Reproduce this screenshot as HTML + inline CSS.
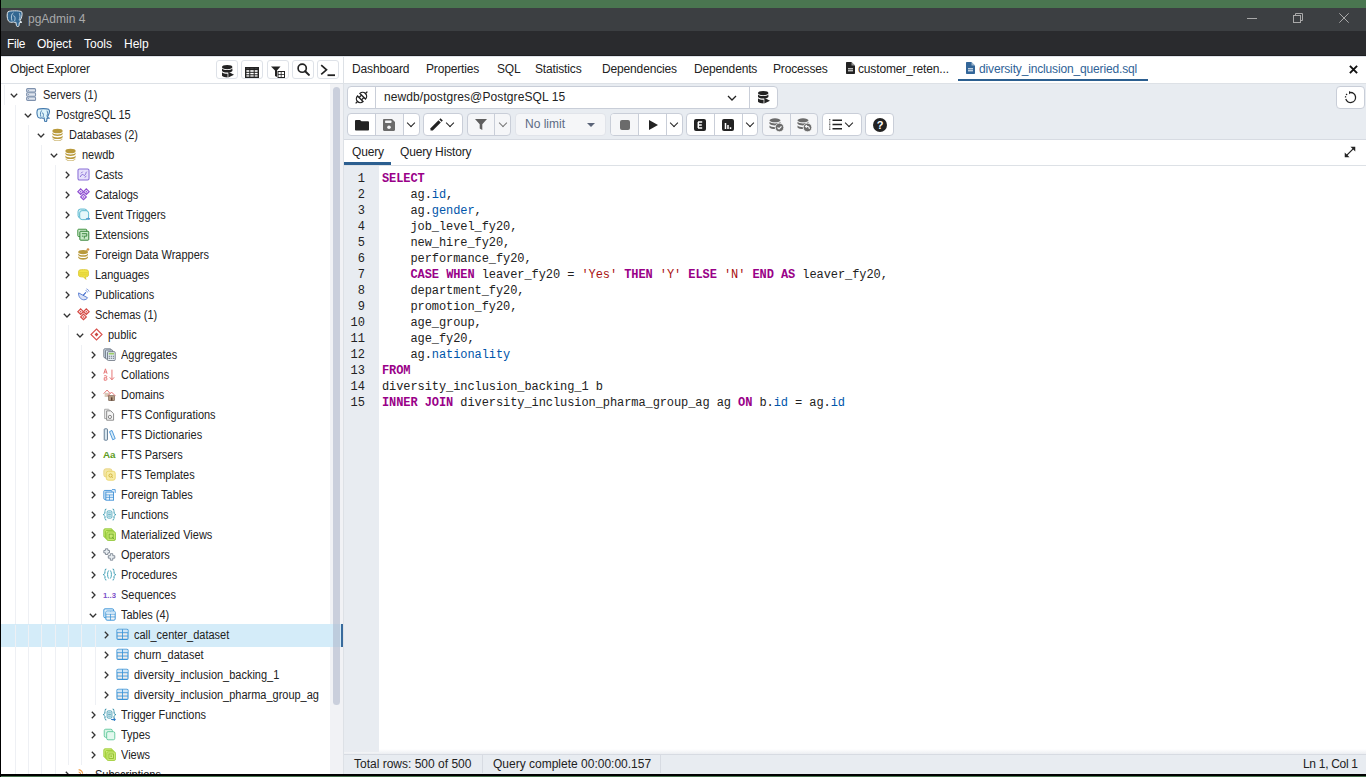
<!DOCTYPE html>
<html><head><meta charset="utf-8">
<style>

*{box-sizing:border-box;margin:0;padding:0}
html,body{width:1366px;height:777px;overflow:hidden;background:#fff;font-family:"Liberation Sans",sans-serif;position:relative}
.a{position:absolute}
#green{left:0;top:0;width:1366px;height:8px;background:#4a7650}
#title{left:0;top:8px;width:1366px;height:23px;background:#3c3f42}
#menu{left:0;top:31px;width:1366px;height:24px;background:#2a2b2e}
#lborder{left:0;top:0;width:1px;height:777px;background:#000;z-index:50}
#bottom{left:0;top:774px;width:1366px;height:2px;background:#000;z-index:49}
#bgreen{left:0;top:776px;width:1366px;height:1px;background:#4a7650;z-index:49}
.menu{color:#fff;font-size:12px;top:37px}
.tt{color:#a9aaab;font-size:12px}
/* left panel */
#oehdr{left:1px;top:55px;width:342px;height:29px;background:#fff;border-bottom:1px solid #dde1e6}
#oehdr .t{left:9px;top:7px;font-size:12px;color:#222;letter-spacing:-0.2px}
.oebtn{top:5px;width:22px;height:19px;border:1px solid #dee2e8;border-radius:3px;background:#fff}
#sep{left:343px;top:55px;width:1px;height:719px;background:#dde1e6}
#tree{left:1px;top:84px;width:342px;height:690px;overflow:hidden;background:#fff}
.row{position:absolute;left:0;width:342px;height:20px}
.row .tx{position:absolute;top:3px;font-size:12px;transform:scaleX(0.915);transform-origin:0 0;color:#222;white-space:nowrap;line-height:14px}
.guide{position:absolute;width:1px;background:#eef0f4}
#strack{left:329px;top:0;width:13px;height:690px;background:#f1f2f5}
#sthumb{left:332px;top:3px;width:7px;height:618px;background:rgba(170,178,198,0.55);border-radius:4px;z-index:5}
/* right */
#tabbar{left:344px;top:55px;width:1022px;height:29px;background:#fff;border-bottom:1px solid #dde1e6}
.tab{top:62px;font-size:12px;color:#222;white-space:nowrap;letter-spacing:-0.15px}
#tbar{left:344px;top:84px;width:1022px;height:56px;background:#e8ecf1;border-bottom:1px solid #d7dbe2}
.box{border:1px solid #c9ced8;border-radius:4px;background:#fff}
#qtabs{left:344px;top:140px;width:1022px;height:26px;background:#fff;border-bottom:1px solid #dde1e6}
#gutter{left:344px;top:166px;width:35px;height:586px;background:#e8ecf1}
#editor{left:379px;top:166px;width:987px;height:586px;background:#fff}
.ln{position:absolute;left:0;width:21px;text-align:right;font-family:"Liberation Mono",monospace;font-size:12px;color:#222;line-height:16px}
.code{position:absolute;left:382px;font-family:"Liberation Mono",monospace;font-size:12px;letter-spacing:-0.08px;color:#222;line-height:16px;white-space:pre}
.k{color:#908;font-weight:bold}
.s{color:#a11}
.p{color:#05a}
#status{left:344px;top:754px;width:1022px;height:20px;background:#e8ecf1;border-top:1px solid #d7dbe2}
.st{font-size:12px;color:#222;top:757px;white-space:nowrap}

.row .chev{position:absolute;line-height:0}
.row .ico{position:absolute;top:3px;line-height:0}
.row.sel::before{content:"";position:absolute;left:0;top:-1px;width:342px;height:23px;background:#d4ecf9}
.selbar{position:absolute;left:340px;top:-1px;width:2px;height:23px;background:#386a9c;z-index:6}
.guide{top:0;height:20px}

.box.dis{background:#f5f6f8}
.chevd{width:10px;height:6px;line-height:0}
.chevd::before{content:"";position:absolute;left:1.5px;top:-3px;width:5px;height:5px;border-right:1.5px solid #222;border-bottom:1.5px solid #222;transform:rotate(45deg)}
.chevd.g::before{border-color:#777}
.qt{top:145px;font-size:12px;color:#222;letter-spacing:-0.15px;white-space:nowrap}

</style></head><body>
<div class="a" id="green"></div>
<div class="a" id="title"></div>
<div class="a" style="left:6px;top:10px;line-height:0"><svg width="17" height="17" viewBox="0 0 16 16"><path d="M2 1.5C4 0.6 12 0.4 14.5 1.5 15.6 2.5 15.2 6 14 8.5 13.5 9.5 13.2 10 13 10.5L15 11.5 12.5 12 12.3 14.5C12.1 16 10 16 9.8 14.5L9.3 11.5C8.5 11.8 7.5 11.8 6.8 11.2 5.5 12 3 11.5 2.2 10.2 0.9 7.8 0.6 3.5 2 1.5Z" fill="#336791" stroke="#e8eef2" stroke-width="0.9"/><path d="M7 2.8C5 3.4 4.6 7 5.6 10M6.8 5.5C8.5 5.2 9 8 8 10.5M12.5 3C13.5 5 13.4 7.5 12.3 9.5" fill="none" stroke="#c9dbe8" stroke-width="0.8"/></svg></div>
<div class="a tt" style="left:28px;top:12px">pgAdmin 4</div>
<div class="a" style="left:1247px;top:18px;width:10px;height:1px;background:#a9a9a9"></div>
<div class="a" style="left:1293px;top:13px;line-height:0"><svg width="10" height="10" viewBox="0 0 10 10"><path d="M2.5 2.5V0.5H9.5V7.5H7.5" fill="none" stroke="#a9a9a9" stroke-width="1"/><rect x="0.5" y="2.5" width="7" height="7" fill="none" stroke="#a9a9a9" stroke-width="1"/></svg></div>
<div class="a" style="left:1339px;top:13px;line-height:0"><svg width="10" height="10" viewBox="0 0 10 10"><path d="M0.3 0.3 9.7 9.7M9.7 0.3 0.3 9.7" stroke="#a9a9a9" stroke-width="1"/></svg></div>
<div class="a" id="menu"></div>
<div class="a menu" style="left:7px;letter-spacing:-0.3px">File</div>
<div class="a menu" style="left:37px">Object</div>
<div class="a menu" style="left:84px">Tools</div>
<div class="a menu" style="left:124px">Help</div>
<div class="a" id="lborder"></div>
<div class="a" style="left:0;top:55px;width:1366px;height:1px;background:#1d1e20;z-index:40"></div>
<div class="a" style="left:0;top:56px;width:1366px;height:1px;background:#dfe3ea;z-index:40"></div>

<div class="a" id="oehdr"><div class="a t">Object Explorer</div>
<div class="a oebtn" style="left:215px"><svg width="12" height="13" viewBox="0 0 12 13" style="position:absolute;left:4.5px;top:4px"><g fill="#222"><ellipse cx="5.2" cy="2.1" rx="5.2" ry="2.1"/><path d="M0 3.4C1 4.6 3 5 5.2 5S9.4 4.6 10.4 3.4V6C9.4 7.2 7.4 7.6 5.2 7.6S1 7.2 0 6Z"/><path d="M0 7.2C1 8.4 3 8.8 5.6 8.8V12.4C3 12.4 1 11.9 0 10.8Z"/><path d="M6.3 6.8 12 9.7 6.3 12.6Z"/></g></svg></div>
<div class="a oebtn" style="left:240px"><svg width="14" height="11" viewBox="0 0 14 11" style="position:absolute;left:3px;top:6px"><rect x="0.7" y="0.7" width="12.6" height="9.6" fill="none" stroke="#222" stroke-width="1.4"/><path d="M0.7 2.2H13.3" stroke="#222" stroke-width="2"/><path d="M0.7 5.3H13.3M0.7 7.8H13.3M4.8 0.7V10.3M9.2 0.7V10.3" stroke="#222" stroke-width="1"/></svg></div>
<div class="a oebtn" style="left:266px"><svg width="14" height="12" viewBox="0 0 14 12" style="position:absolute;left:3px;top:5px"><path d="M0 0.5H9.5L6 4.5V11L4 10V4.5Z" fill="#222"/><rect x="7" y="5.5" width="6.5" height="6" fill="none" stroke="#222" stroke-width="1"/><path d="M7 8.5H13.5M10.2 5.5V11.5" stroke="#222" stroke-width="0.8"/></svg></div>
<div class="a oebtn" style="left:291px"><svg width="13" height="13" viewBox="0 0 14 14" style="position:absolute;left:4px;top:2px"><circle cx="5.6" cy="5.6" r="4.4" fill="none" stroke="#222" stroke-width="1.8"/><path d="M8.8 8.8 12.8 12.8" stroke="#222" stroke-width="2.2" stroke-linecap="round"/></svg></div>
<div class="a oebtn" style="left:316px"><svg width="16" height="13" viewBox="0 0 16 13" style="position:absolute;left:2px;top:3px"><path d="M1.2 1.2 6.5 5.8 1.2 10.4" fill="none" stroke="#222" stroke-width="1.7"/><path d="M7.5 11.2H15" stroke="#222" stroke-width="1.8"/></svg></div>
</div>
<div class="a" id="tree">
<div class="a" id="strack"></div><div class="a" id="sthumb"></div>
<div class="row" style="top:1px"><div class="guide" style="left:2.5px"></div><div class="chev" style="left:9.4px;top:8px"><svg width="8" height="5" viewBox="0 0 8 5"><path d="M0.8 0.8 4 4 7.2 0.8" fill="none" stroke="#333" stroke-width="1.3"/></svg></div><div class="ico" style="left:23.7px"><svg width="13" height="13" viewBox="0 0 16 16"><g fill="#dfe5ee" stroke="#7e91ad" stroke-width="1.3"><rect x="2" y="0.8" width="11" height="4.2" rx="1.2"/><rect x="2" y="5.9" width="11" height="4.2" rx="1.2"/><rect x="2" y="11" width="11" height="4.2" rx="1.2"/></g><g fill="#7e91ad"><rect x="3.5" y="2.5" width="1.5" height="1"/><rect x="3.5" y="7.5" width="1.5" height="1"/><rect x="3.5" y="12.6" width="1.5" height="1"/></g></svg></div><div class="tx" style="left:41.6px">Servers (1)</div></div>
<div class="row" style="top:21px"><div class="guide" style="left:13.5px"></div><div class="chev" style="left:22.5px;top:8px"><svg width="8" height="5" viewBox="0 0 8 5"><path d="M0.8 0.8 4 4 7.2 0.8" fill="none" stroke="#333" stroke-width="1.3"/></svg></div><div class="ico" style="left:36.8px"><svg style="margin-left:-1.5px" width="14" height="14" viewBox="0 0 16 16"><path d="M2 1.5C4 0.6 12 0.4 14.5 1.5 15.6 2.5 15.2 6 14 8.5 13.5 9.5 13.2 10 13 10.5L15 11.5 12.5 12 12.3 14.5C12.1 16 10 16 9.8 14.5L9.3 11.5C8.5 11.8 7.5 11.8 6.8 11.2 5.5 12 3 11.5 2.2 10.2 0.9 7.8 0.6 3.5 2 1.5Z" fill="#def4fb" stroke="#4379ad" stroke-width="1.25"/><path d="M7 2.8C5 3.4 4.6 7 5.6 10M6.8 5.5C8.5 5.2 9 8 8 10.5M12.5 3C13.5 5 13.4 7.5 12.3 9.5" fill="none" stroke="#4379ad" stroke-width="1"/></svg></div><div class="tx" style="left:54.7px">PostgreSQL 15</div></div>
<div class="row" style="top:41px"><div class="guide" style="left:13.5px"></div><div class="guide" style="left:26.8px"></div><div class="chev" style="left:35.6px;top:8px"><svg width="8" height="5" viewBox="0 0 8 5"><path d="M0.8 0.8 4 4 7.2 0.8" fill="none" stroke="#333" stroke-width="1.3"/></svg></div><div class="ico" style="left:49.9px"><svg width="13" height="13" viewBox="0 0 16 16"><g fill="#b99a3c"><ellipse cx="8" cy="3.6" rx="6.3" ry="2.8"/><path d="M1.7 5.6C2.5 7.3 5 7.9 8 7.9S13.5 7.3 14.3 5.6V7.5C13.5 9.2 11 9.9 8 9.9S2.5 9.2 1.7 7.5Z"/><path d="M1.7 9.3C2.5 11 5 11.6 8 11.6S13.5 11 14.3 9.3V11.3C13.5 13 11 13.6 8 13.6S2.5 13 1.7 11.3Z"/><path d="M1.7 13C2.5 14.5 5 15.2 8 15.2S13.5 14.5 14.3 13V13.6C13.5 15.2 11 15.8 8 15.8S2.5 15.2 1.7 13.6Z"/></g></svg></div><div class="tx" style="left:67.8px">Databases (2)</div></div>
<div class="row" style="top:61px"><div class="guide" style="left:13.5px"></div><div class="guide" style="left:26.8px"></div><div class="guide" style="left:40.2px"></div><div class="chev" style="left:48.7px;top:8px"><svg width="8" height="5" viewBox="0 0 8 5"><path d="M0.8 0.8 4 4 7.2 0.8" fill="none" stroke="#333" stroke-width="1.3"/></svg></div><div class="ico" style="left:63.0px"><svg width="13" height="13" viewBox="0 0 16 16"><g fill="#b99a3c"><ellipse cx="8" cy="3.6" rx="6.3" ry="2.8"/><path d="M1.7 5.6C2.5 7.3 5 7.9 8 7.9S13.5 7.3 14.3 5.6V7.5C13.5 9.2 11 9.9 8 9.9S2.5 9.2 1.7 7.5Z"/><path d="M1.7 9.3C2.5 11 5 11.6 8 11.6S13.5 11 14.3 9.3V11.3C13.5 13 11 13.6 8 13.6S2.5 13 1.7 11.3Z"/><path d="M1.7 13C2.5 14.5 5 15.2 8 15.2S13.5 14.5 14.3 13V13.6C13.5 15.2 11 15.8 8 15.8S2.5 15.2 1.7 13.6Z"/></g></svg></div><div class="tx" style="left:80.9px">newdb</div></div>
<div class="row" style="top:81px"><div class="guide" style="left:13.5px"></div><div class="guide" style="left:26.8px"></div><div class="guide" style="left:40.2px"></div><div class="guide" style="left:53.5px"></div><div class="chev" style="left:63.6px;top:6px"><svg width="5" height="8" viewBox="0 0 5 8"><path d="M0.8 0.8 4 4 0.8 7.2" fill="none" stroke="#333" stroke-width="1.3"/></svg></div><div class="ico" style="left:76.1px"><svg width="13" height="13" viewBox="0 0 16 16"><rect x="1.2" y="1.2" width="13.6" height="13.6" rx="1.8" fill="#e6e0fb" stroke="#8a6fd8" stroke-width="1.3"/><path d="M4 11C5 9 5.5 8 7 8S8 10 9.5 9 11 5 12 4.5M5 6.5 7 4.5M9.5 11.5 11.5 10" fill="none" stroke="#7b5fd0" stroke-width="1.1"/></svg></div><div class="tx" style="left:94.0px">Casts</div></div>
<div class="row" style="top:101px"><div class="guide" style="left:13.5px"></div><div class="guide" style="left:26.8px"></div><div class="guide" style="left:40.2px"></div><div class="guide" style="left:53.5px"></div><div class="chev" style="left:63.6px;top:6px"><svg width="5" height="8" viewBox="0 0 5 8"><path d="M0.8 0.8 4 4 0.8 7.2" fill="none" stroke="#333" stroke-width="1.3"/></svg></div><div class="ico" style="left:76.1px"><svg width="13" height="13" viewBox="0 0 16 16"><g fill="#eadcfa" stroke="#8f4fd0" stroke-width="1.45"><path d="M4.5 1 8 4.5 4.5 8 1 4.5Z"/><path d="M11.5 1 15 4.5 11.5 8 8 4.5Z"/><path d="M8 7.5 11.5 11 8 14.5 4.5 11Z"/></g><g fill="#8f4fd0"><circle cx="4.5" cy="4.5" r="0.9"/><circle cx="11.5" cy="4.5" r="0.9"/><circle cx="8" cy="11" r="0.9"/></g></svg></div><div class="tx" style="left:94.0px">Catalogs</div></div>
<div class="row" style="top:121px"><div class="guide" style="left:13.5px"></div><div class="guide" style="left:26.8px"></div><div class="guide" style="left:40.2px"></div><div class="guide" style="left:53.5px"></div><div class="chev" style="left:63.6px;top:6px"><svg width="5" height="8" viewBox="0 0 5 8"><path d="M0.8 0.8 4 4 0.8 7.2" fill="none" stroke="#333" stroke-width="1.3"/></svg></div><div class="ico" style="left:76.1px"><svg width="13" height="13" viewBox="0 0 16 16"><rect x="1.3" y="1.3" width="11" height="11" rx="3" fill="#d6f0f6" stroke="#5bb8cf" stroke-width="1.2"/><rect x="3.3" y="3.3" width="11" height="11" rx="3" fill="#e6f7fa" stroke="#5bb8cf" stroke-width="1.2"/><path d="M11 13.3H15.5M14 11.8 15.5 13.3 14 14.8" fill="none" stroke="#3a86c8" stroke-width="1.2"/></svg></div><div class="tx" style="left:94.0px">Event Triggers</div></div>
<div class="row" style="top:141px"><div class="guide" style="left:13.5px"></div><div class="guide" style="left:26.8px"></div><div class="guide" style="left:40.2px"></div><div class="guide" style="left:53.5px"></div><div class="chev" style="left:63.6px;top:6px"><svg width="5" height="8" viewBox="0 0 5 8"><path d="M0.8 0.8 4 4 0.8 7.2" fill="none" stroke="#333" stroke-width="1.3"/></svg></div><div class="ico" style="left:76.1px"><svg width="13" height="13" viewBox="0 0 16 16"><rect x="1" y="1.5" width="11" height="9" rx="1" fill="#d6efd6" stroke="#3b8f3b" stroke-width="1.2"/><rect x="3.5" y="4" width="11" height="11" rx="1" fill="#c8eac8" stroke="#2e7d32" stroke-width="1.2"/><path d="M6 7H12V10H9V13M6 10H8" fill="none" stroke="#2e7d32" stroke-width="1.1"/></svg></div><div class="tx" style="left:94.0px">Extensions</div></div>
<div class="row" style="top:161px"><div class="guide" style="left:13.5px"></div><div class="guide" style="left:26.8px"></div><div class="guide" style="left:40.2px"></div><div class="guide" style="left:53.5px"></div><div class="chev" style="left:63.6px;top:6px"><svg width="5" height="8" viewBox="0 0 5 8"><path d="M0.8 0.8 4 4 0.8 7.2" fill="none" stroke="#333" stroke-width="1.3"/></svg></div><div class="ico" style="left:76.1px"><svg width="13" height="13" viewBox="0 0 16 16"><g fill="#b99a3c"><ellipse cx="7.5" cy="5" rx="6" ry="2.6"/><path d="M1.5 6.8C2.3 8.4 4.6 9 7.5 9S12.7 8.4 13.5 6.8V8.6C12.7 10.2 10.4 10.8 7.5 10.8S2.3 10.2 1.5 8.6Z"/><path d="M1.5 10.2C2.3 11.8 4.6 12.4 7.5 12.4S12.7 11.8 13.5 10.2V12C12.7 13.6 10.4 14.4 7.5 14.4S2.3 13.6 1.5 12Z"/></g><circle cx="13.5" cy="1.8" r="1.6" fill="#d38c4a"/><path d="M11 3.5 13 2" stroke="#b99a3c" stroke-width="0.8"/></svg></div><div class="tx" style="left:94.0px">Foreign Data Wrappers</div></div>
<div class="row" style="top:181px"><div class="guide" style="left:13.5px"></div><div class="guide" style="left:26.8px"></div><div class="guide" style="left:40.2px"></div><div class="guide" style="left:53.5px"></div><div class="chev" style="left:63.6px;top:6px"><svg width="5" height="8" viewBox="0 0 5 8"><path d="M0.8 0.8 4 4 0.8 7.2" fill="none" stroke="#333" stroke-width="1.3"/></svg></div><div class="ico" style="left:76.1px"><svg width="13" height="13" viewBox="0 0 16 16"><path d="M2 4C2 2.5 4 2 8 2S14 2.5 14 4V9C14 10.5 12 11 10 11L11 14 8 11C4 11 2 10.5 2 9Z" fill="#f2e54a" stroke="#d7c323" stroke-width="1"/><path d="M3 6H13M3 8.5H13" stroke="#d7c323" stroke-width="0.8"/></svg></div><div class="tx" style="left:94.0px">Languages</div></div>
<div class="row" style="top:201px"><div class="guide" style="left:13.5px"></div><div class="guide" style="left:26.8px"></div><div class="guide" style="left:40.2px"></div><div class="guide" style="left:53.5px"></div><div class="chev" style="left:63.6px;top:6px"><svg width="5" height="8" viewBox="0 0 5 8"><path d="M0.8 0.8 4 4 0.8 7.2" fill="none" stroke="#333" stroke-width="1.3"/></svg></div><div class="ico" style="left:76.1px"><svg width="13" height="13" viewBox="0 0 16 16"><path d="M2 6C1.5 10 4 14 8 14.5 11 14.8 12.5 13 13 12Z" fill="#dbe3f7" stroke="#5b7fd3" stroke-width="1.2"/><path d="M7.5 9 11 5.5" stroke="#3360c8" stroke-width="1.3"/><path d="M10.5 3A3 3 0 0 1 13 5.5M11.5 1A5 5 0 0 1 15 4.5" fill="none" stroke="#5b7fd3" stroke-width="0.9"/></svg></div><div class="tx" style="left:94.0px">Publications</div></div>
<div class="row" style="top:221px"><div class="guide" style="left:13.5px"></div><div class="guide" style="left:26.8px"></div><div class="guide" style="left:40.2px"></div><div class="guide" style="left:53.5px"></div><div class="chev" style="left:61.8px;top:8px"><svg width="8" height="5" viewBox="0 0 8 5"><path d="M0.8 0.8 4 4 7.2 0.8" fill="none" stroke="#333" stroke-width="1.3"/></svg></div><div class="ico" style="left:76.1px"><svg width="13" height="13" viewBox="0 0 16 16"><g fill="#fbe3e2" stroke="#d44a45" stroke-width="1.45"><path d="M4.5 1 8 4.5 4.5 8 1 4.5Z"/><path d="M11.5 1 15 4.5 11.5 8 8 4.5Z"/><path d="M8 7.5 11.5 11 8 14.5 4.5 11Z"/></g><g fill="#d44a45"><circle cx="4.5" cy="4.5" r="0.9"/><circle cx="11.5" cy="4.5" r="0.9"/><circle cx="8" cy="11" r="0.9"/></g></svg></div><div class="tx" style="left:94.0px">Schemas (1)</div></div>
<div class="row" style="top:241px"><div class="guide" style="left:13.5px"></div><div class="guide" style="left:26.8px"></div><div class="guide" style="left:40.2px"></div><div class="guide" style="left:53.5px"></div><div class="guide" style="left:66.8px"></div><div class="chev" style="left:75.0px;top:8px"><svg width="8" height="5" viewBox="0 0 8 5"><path d="M0.8 0.8 4 4 7.2 0.8" fill="none" stroke="#333" stroke-width="1.3"/></svg></div><div class="ico" style="left:89.2px"><svg width="13" height="13" viewBox="0 0 16 16"><path d="M8 1.2 14.8 8 8 14.8 1.2 8Z" fill="#fff" stroke="#d9534f" stroke-width="1.4"/><path d="M8 5.6 10.4 8 8 10.4 5.6 8Z" fill="#c9453f"/></svg></div><div class="tx" style="left:107.2px">public</div></div>
<div class="row" style="top:261px"><div class="guide" style="left:13.5px"></div><div class="guide" style="left:26.8px"></div><div class="guide" style="left:40.2px"></div><div class="guide" style="left:53.5px"></div><div class="guide" style="left:66.8px"></div><div class="guide" style="left:80.2px"></div><div class="chev" style="left:89.9px;top:6px"><svg width="5" height="8" viewBox="0 0 5 8"><path d="M0.8 0.8 4 4 0.8 7.2" fill="none" stroke="#333" stroke-width="1.3"/></svg></div><div class="ico" style="left:102.2px"><svg width="13" height="13" viewBox="0 0 16 16"><g stroke="#6b7380" stroke-width="1.1"><rect x="1" y="1" width="9" height="11" rx="1.2" fill="#d7e5ef"/><rect x="3" y="2.5" width="9" height="11" rx="1.2" fill="#d7e5ef"/><rect x="5.5" y="4.5" width="9.5" height="11" rx="1.2" fill="#e4edf3"/></g><rect x="7" y="6" width="6.5" height="2" fill="#9ccc65"/><g fill="#6b7380"><rect x="7" y="9.5" width="1.5" height="1.3"/><rect x="9.5" y="9.5" width="1.5" height="1.3"/><rect x="12" y="9.5" width="1.5" height="1.3"/><rect x="7" y="12" width="1.5" height="1.3"/><rect x="9.5" y="12" width="1.5" height="1.3"/><rect x="12" y="12" width="1.5" height="1.3"/></g></svg></div><div class="tx" style="left:120.3px">Aggregates</div></div>
<div class="row" style="top:281px"><div class="guide" style="left:13.5px"></div><div class="guide" style="left:26.8px"></div><div class="guide" style="left:40.2px"></div><div class="guide" style="left:53.5px"></div><div class="guide" style="left:66.8px"></div><div class="guide" style="left:80.2px"></div><div class="chev" style="left:89.9px;top:6px"><svg width="5" height="8" viewBox="0 0 5 8"><path d="M0.8 0.8 4 4 0.8 7.2" fill="none" stroke="#333" stroke-width="1.3"/></svg></div><div class="ico" style="left:102.2px"><svg width="13" height="13" viewBox="0 0 16 16"><g fill="none" stroke="#e57373" stroke-width="1.2"><path d="M1 7 3 1 5 7M1.7 5H4.3"/><path d="M1.5 9.5H3.6C5 9.5 5 12 3.6 12H1.5V15H3.8C5.3 15 5.3 12 3.8 12"/><path d="M11 2V14.5M8.3 11.5 11 14.5 13.7 11.5"/></g></svg></div><div class="tx" style="left:120.3px">Collations</div></div>
<div class="row" style="top:301px"><div class="guide" style="left:13.5px"></div><div class="guide" style="left:26.8px"></div><div class="guide" style="left:40.2px"></div><div class="guide" style="left:53.5px"></div><div class="guide" style="left:66.8px"></div><div class="guide" style="left:80.2px"></div><div class="chev" style="left:89.9px;top:6px"><svg width="5" height="8" viewBox="0 0 5 8"><path d="M0.8 0.8 4 4 0.8 7.2" fill="none" stroke="#333" stroke-width="1.3"/></svg></div><div class="ico" style="left:102.2px"><svg width="13" height="13" viewBox="0 0 16 16"><path d="M0.8 7 5 2.5 9 7" fill="none" stroke="#e57373" stroke-width="1.2"/><rect x="2" y="6" width="6" height="5" fill="#d7c9b9"/><path d="M5.5 10 10.5 5 15.5 10" fill="none" stroke="#e57373" stroke-width="1.2"/><rect x="7" y="9.5" width="7" height="6" fill="#b89e86" stroke="#6d5444" stroke-width="0.8"/><rect x="9.8" y="11.5" width="1.8" height="4" fill="#5b4033"/></svg></div><div class="tx" style="left:120.3px">Domains</div></div>
<div class="row" style="top:321px"><div class="guide" style="left:13.5px"></div><div class="guide" style="left:26.8px"></div><div class="guide" style="left:40.2px"></div><div class="guide" style="left:53.5px"></div><div class="guide" style="left:66.8px"></div><div class="guide" style="left:80.2px"></div><div class="chev" style="left:89.9px;top:6px"><svg width="5" height="8" viewBox="0 0 5 8"><path d="M0.8 0.8 4 4 0.8 7.2" fill="none" stroke="#333" stroke-width="1.3"/></svg></div><div class="ico" style="left:102.2px"><svg width="13" height="13" viewBox="0 0 16 16"><path d="M2 1.5H7L10 4.5V13H2Z" fill="#f0f0f0" stroke="#9a9a9a" stroke-width="1"/><path d="M4.5 3.5H9.5L13 7V15H4.5Z" fill="#f5f5f5" stroke="#808080" stroke-width="1.1"/><circle cx="8.5" cy="11" r="2" fill="none" stroke="#707070" stroke-width="1"/></svg></div><div class="tx" style="left:120.3px">FTS Configurations</div></div>
<div class="row" style="top:341px"><div class="guide" style="left:13.5px"></div><div class="guide" style="left:26.8px"></div><div class="guide" style="left:40.2px"></div><div class="guide" style="left:53.5px"></div><div class="guide" style="left:66.8px"></div><div class="guide" style="left:80.2px"></div><div class="chev" style="left:89.9px;top:6px"><svg width="5" height="8" viewBox="0 0 5 8"><path d="M0.8 0.8 4 4 0.8 7.2" fill="none" stroke="#333" stroke-width="1.3"/></svg></div><div class="ico" style="left:102.2px"><svg width="13" height="13" viewBox="0 0 16 16"><rect x="1.5" y="1" width="4" height="14" rx="0.8" fill="#dbe8f0" stroke="#55708a" stroke-width="1.1"/><path d="M8 4.5 11 3 15 13 12 14.5Z" fill="#d9ecf8" stroke="#3d8fd6" stroke-width="1.1"/></svg></div><div class="tx" style="left:120.3px">FTS Dictionaries</div></div>
<div class="row" style="top:361px"><div class="guide" style="left:13.5px"></div><div class="guide" style="left:26.8px"></div><div class="guide" style="left:40.2px"></div><div class="guide" style="left:53.5px"></div><div class="guide" style="left:66.8px"></div><div class="guide" style="left:80.2px"></div><div class="chev" style="left:89.9px;top:6px"><svg width="5" height="8" viewBox="0 0 5 8"><path d="M0.8 0.8 4 4 0.8 7.2" fill="none" stroke="#333" stroke-width="1.3"/></svg></div><div class="ico" style="left:102.2px"><svg width="13" height="13" viewBox="0 0 16 16"><text x="0" y="12.5" font-family="Liberation Sans" font-weight="bold" font-size="11" fill="#5c9c22" textLength="15.5" lengthAdjust="spacingAndGlyphs">Aa</text></svg></div><div class="tx" style="left:120.3px">FTS Parsers</div></div>
<div class="row" style="top:381px"><div class="guide" style="left:13.5px"></div><div class="guide" style="left:26.8px"></div><div class="guide" style="left:40.2px"></div><div class="guide" style="left:53.5px"></div><div class="guide" style="left:66.8px"></div><div class="guide" style="left:80.2px"></div><div class="chev" style="left:89.9px;top:6px"><svg width="5" height="8" viewBox="0 0 5 8"><path d="M0.8 0.8 4 4 0.8 7.2" fill="none" stroke="#333" stroke-width="1.3"/></svg></div><div class="ico" style="left:102.2px"><svg width="13" height="13" viewBox="0 0 16 16"><rect x="1" y="1" width="10" height="10" rx="2.5" fill="#f3e6a8" stroke="#e6d27a" stroke-width="1"/><rect x="4" y="4" width="11" height="11" rx="2.5" fill="#f7eca6" stroke="#e9d46a" stroke-width="1.1"/><circle cx="9.3" cy="9.3" r="2" fill="none" stroke="#c9a92e" stroke-width="1"/><path d="M10.7 10.7 12 12" stroke="#c9a92e" stroke-width="1"/></svg></div><div class="tx" style="left:120.3px">FTS Templates</div></div>
<div class="row" style="top:401px"><div class="guide" style="left:13.5px"></div><div class="guide" style="left:26.8px"></div><div class="guide" style="left:40.2px"></div><div class="guide" style="left:53.5px"></div><div class="guide" style="left:66.8px"></div><div class="guide" style="left:80.2px"></div><div class="chev" style="left:89.9px;top:6px"><svg width="5" height="8" viewBox="0 0 5 8"><path d="M0.8 0.8 4 4 0.8 7.2" fill="none" stroke="#333" stroke-width="1.3"/></svg></div><div class="ico" style="left:102.2px"><svg width="13" height="13" viewBox="0 0 16 16"><rect x="1" y="3" width="10" height="11" rx="1" fill="#dcecf9" stroke="#3d8fd6" stroke-width="1.1"/><rect x="3.5" y="5" width="9.5" height="10" fill="#eaf4fb" stroke="#3d8fd6" stroke-width="1.1"/><path d="M3.5 8.5H13M3.5 11.5H13M8 8.5V15" stroke="#3d8fd6" stroke-width="0.9"/><path d="M11 2H15V6" fill="none" stroke="#3d8fd6" stroke-width="1.1"/></svg></div><div class="tx" style="left:120.3px">Foreign Tables</div></div>
<div class="row" style="top:421px"><div class="guide" style="left:13.5px"></div><div class="guide" style="left:26.8px"></div><div class="guide" style="left:40.2px"></div><div class="guide" style="left:53.5px"></div><div class="guide" style="left:66.8px"></div><div class="guide" style="left:80.2px"></div><div class="chev" style="left:89.9px;top:6px"><svg width="5" height="8" viewBox="0 0 5 8"><path d="M0.8 0.8 4 4 0.8 7.2" fill="none" stroke="#333" stroke-width="1.3"/></svg></div><div class="ico" style="left:102.2px"><svg width="13" height="13" viewBox="0 0 16 16"><path d="M4.2 1.2C2.5 1.2 2.4 3 2.4 5S1.5 7.5 0.6 8C1.5 8.5 2.4 9 2.4 11S2.5 14.8 4.2 14.8M11.8 1.2C13.5 1.2 13.6 3 13.6 5S14.5 7.5 15.4 8C14.5 8.5 13.6 9 13.6 11S13.5 14.8 11.8 14.8" fill="none" stroke="#4aa3b8" stroke-width="1.4" stroke-dasharray="3 0.7"/><rect x="5" y="3.5" width="6" height="9" rx="1.5" fill="#dff2f7" stroke="#4aa3b8" stroke-width="1"/><path d="M6.3 6H9.7M6.3 8H9.7M6.3 10H9.7" stroke="#4aa3b8" stroke-width="0.9"/></svg></div><div class="tx" style="left:120.3px">Functions</div></div>
<div class="row" style="top:441px"><div class="guide" style="left:13.5px"></div><div class="guide" style="left:26.8px"></div><div class="guide" style="left:40.2px"></div><div class="guide" style="left:53.5px"></div><div class="guide" style="left:66.8px"></div><div class="guide" style="left:80.2px"></div><div class="chev" style="left:89.9px;top:6px"><svg width="5" height="8" viewBox="0 0 5 8"><path d="M0.8 0.8 4 4 0.8 7.2" fill="none" stroke="#333" stroke-width="1.3"/></svg></div><div class="ico" style="left:102.2px"><svg width="13" height="13" viewBox="0 0 16 16"><rect x="1" y="1" width="10.5" height="10.5" rx="1.5" fill="#c9ea72" stroke="#8fc536" stroke-width="1.1"/><rect x="3" y="3" width="10.5" height="10.5" rx="1.5" fill="#c9ea72" stroke="#8fc536" stroke-width="1.1"/><rect x="4.8" y="4.8" width="10.5" height="10.5" rx="1.5" fill="#c9ea72" stroke="#8fc536" stroke-width="1.1"/><rect x="7.5" y="7.5" width="5" height="5" fill="none" stroke="#6ea82a" stroke-width="1"/><path d="M11 11 14 14" stroke="#6ea82a" stroke-width="1"/></svg></div><div class="tx" style="left:120.3px">Materialized Views</div></div>
<div class="row" style="top:461px"><div class="guide" style="left:13.5px"></div><div class="guide" style="left:26.8px"></div><div class="guide" style="left:40.2px"></div><div class="guide" style="left:53.5px"></div><div class="guide" style="left:66.8px"></div><div class="guide" style="left:80.2px"></div><div class="chev" style="left:89.9px;top:6px"><svg width="5" height="8" viewBox="0 0 5 8"><path d="M0.8 0.8 4 4 0.8 7.2" fill="none" stroke="#333" stroke-width="1.3"/></svg></div><div class="ico" style="left:102.2px"><svg width="13" height="13" viewBox="0 0 16 16"><g fill="#e9eef2" stroke="#7b8591" stroke-width="1.1"><path d="M3 1H6V3H8V6H6V8H3V6H1V3H3Z"/><path d="M9 7H12V9.5H14.5V12.5H12V15H9V12.5H6.5V9.5H9Z"/></g></svg></div><div class="tx" style="left:120.3px">Operators</div></div>
<div class="row" style="top:481px"><div class="guide" style="left:13.5px"></div><div class="guide" style="left:26.8px"></div><div class="guide" style="left:40.2px"></div><div class="guide" style="left:53.5px"></div><div class="guide" style="left:66.8px"></div><div class="guide" style="left:80.2px"></div><div class="chev" style="left:89.9px;top:6px"><svg width="5" height="8" viewBox="0 0 5 8"><path d="M0.8 0.8 4 4 0.8 7.2" fill="none" stroke="#333" stroke-width="1.3"/></svg></div><div class="ico" style="left:102.2px"><svg width="13" height="13" viewBox="0 0 16 16"><path d="M4.2 1.2C2.5 1.2 2.4 3 2.4 5S1.5 7.5 0.6 8C1.5 8.5 2.4 9 2.4 11S2.5 14.8 4.2 14.8M11.8 1.2C13.5 1.2 13.6 3 13.6 5S14.5 7.5 15.4 8C14.5 8.5 13.6 9 13.6 11S13.5 14.8 11.8 14.8" fill="none" stroke="#4aa3b8" stroke-width="1.4" stroke-dasharray="3 0.7"/><path d="M7 3C5 5 5 11 7 13M9 3C11 5 11 11 9 13" fill="#dff6f9" stroke="#4aa3b8" stroke-width="1.1"/></svg></div><div class="tx" style="left:120.3px">Procedures</div></div>
<div class="row" style="top:501px"><div class="guide" style="left:13.5px"></div><div class="guide" style="left:26.8px"></div><div class="guide" style="left:40.2px"></div><div class="guide" style="left:53.5px"></div><div class="guide" style="left:66.8px"></div><div class="guide" style="left:80.2px"></div><div class="chev" style="left:89.9px;top:6px"><svg width="5" height="8" viewBox="0 0 5 8"><path d="M0.8 0.8 4 4 0.8 7.2" fill="none" stroke="#333" stroke-width="1.3"/></svg></div><div class="ico" style="left:102.2px"><svg width="13" height="13" viewBox="0 0 16 16"><text x="0" y="12" font-family="Liberation Sans" font-weight="bold" font-size="8.5" fill="#7b4fc9" textLength="16" lengthAdjust="spacingAndGlyphs">1..3</text></svg></div><div class="tx" style="left:120.3px">Sequences</div></div>
<div class="row" style="top:521px"><div class="guide" style="left:13.5px"></div><div class="guide" style="left:26.8px"></div><div class="guide" style="left:40.2px"></div><div class="guide" style="left:53.5px"></div><div class="guide" style="left:66.8px"></div><div class="guide" style="left:80.2px"></div><div class="chev" style="left:88.1px;top:8px"><svg width="8" height="5" viewBox="0 0 8 5"><path d="M0.8 0.8 4 4 7.2 0.8" fill="none" stroke="#333" stroke-width="1.3"/></svg></div><div class="ico" style="left:102.2px"><svg width="13" height="13" viewBox="0 0 16 16"><rect x="1" y="1" width="12" height="11" rx="1.5" fill="#e6f2fb" stroke="#3d95d8" stroke-width="1.2"/><rect x="3.5" y="3.8" width="11.5" height="11.2" rx="1.5" fill="#f4f4f4" stroke="#3d95d8" stroke-width="1.2"/><path d="M3.5 7.5H15M3.5 11H15M9.2 3.8V15" stroke="#3d95d8" stroke-width="1"/><rect x="4" y="4.3" width="10.5" height="3" fill="#cfe6f7"/></svg></div><div class="tx" style="left:120.3px">Tables (4)</div></div>
<div class="row sel" style="top:541px"><div class="guide" style="left:13.5px"></div><div class="guide" style="left:26.8px"></div><div class="guide" style="left:40.2px"></div><div class="guide" style="left:53.5px"></div><div class="guide" style="left:66.8px"></div><div class="guide" style="left:80.2px"></div><div class="guide" style="left:93.5px"></div><div class="chev" style="left:103.0px;top:6px"><svg width="5" height="8" viewBox="0 0 5 8"><path d="M0.8 0.8 4 4 0.8 7.2" fill="none" stroke="#333" stroke-width="1.3"/></svg></div><div class="ico" style="left:115.3px"><svg width="13" height="13" viewBox="0 0 16 16"><rect x="1.2" y="1.5" width="13.6" height="12.5" rx="1.3" fill="#ececec" stroke="#3d95d8" stroke-width="1.3"/><rect x="1.8" y="2.1" width="12.4" height="3.5" fill="#cfe6f7"/><path d="M1.2 5.8H14.8M1.2 9.9H14.8M8 1.5V14" stroke="#3d95d8" stroke-width="1.1"/></svg></div><div class="tx" style="left:133.4px">call_center_dataset</div><div class="selbar"></div></div>
<div class="row" style="top:561px"><div class="guide" style="left:13.5px"></div><div class="guide" style="left:26.8px"></div><div class="guide" style="left:40.2px"></div><div class="guide" style="left:53.5px"></div><div class="guide" style="left:66.8px"></div><div class="guide" style="left:80.2px"></div><div class="guide" style="left:93.5px"></div><div class="chev" style="left:103.0px;top:6px"><svg width="5" height="8" viewBox="0 0 5 8"><path d="M0.8 0.8 4 4 0.8 7.2" fill="none" stroke="#333" stroke-width="1.3"/></svg></div><div class="ico" style="left:115.3px"><svg width="13" height="13" viewBox="0 0 16 16"><rect x="1.2" y="1.5" width="13.6" height="12.5" rx="1.3" fill="#ececec" stroke="#3d95d8" stroke-width="1.3"/><rect x="1.8" y="2.1" width="12.4" height="3.5" fill="#cfe6f7"/><path d="M1.2 5.8H14.8M1.2 9.9H14.8M8 1.5V14" stroke="#3d95d8" stroke-width="1.1"/></svg></div><div class="tx" style="left:133.4px">churn_dataset</div></div>
<div class="row" style="top:581px"><div class="guide" style="left:13.5px"></div><div class="guide" style="left:26.8px"></div><div class="guide" style="left:40.2px"></div><div class="guide" style="left:53.5px"></div><div class="guide" style="left:66.8px"></div><div class="guide" style="left:80.2px"></div><div class="guide" style="left:93.5px"></div><div class="chev" style="left:103.0px;top:6px"><svg width="5" height="8" viewBox="0 0 5 8"><path d="M0.8 0.8 4 4 0.8 7.2" fill="none" stroke="#333" stroke-width="1.3"/></svg></div><div class="ico" style="left:115.3px"><svg width="13" height="13" viewBox="0 0 16 16"><rect x="1.2" y="1.5" width="13.6" height="12.5" rx="1.3" fill="#ececec" stroke="#3d95d8" stroke-width="1.3"/><rect x="1.8" y="2.1" width="12.4" height="3.5" fill="#cfe6f7"/><path d="M1.2 5.8H14.8M1.2 9.9H14.8M8 1.5V14" stroke="#3d95d8" stroke-width="1.1"/></svg></div><div class="tx" style="left:133.4px">diversity_inclusion_backing_1</div></div>
<div class="row" style="top:601px"><div class="guide" style="left:13.5px"></div><div class="guide" style="left:26.8px"></div><div class="guide" style="left:40.2px"></div><div class="guide" style="left:53.5px"></div><div class="guide" style="left:66.8px"></div><div class="guide" style="left:80.2px"></div><div class="guide" style="left:93.5px"></div><div class="chev" style="left:103.0px;top:6px"><svg width="5" height="8" viewBox="0 0 5 8"><path d="M0.8 0.8 4 4 0.8 7.2" fill="none" stroke="#333" stroke-width="1.3"/></svg></div><div class="ico" style="left:115.3px"><svg width="13" height="13" viewBox="0 0 16 16"><rect x="1.2" y="1.5" width="13.6" height="12.5" rx="1.3" fill="#ececec" stroke="#3d95d8" stroke-width="1.3"/><rect x="1.8" y="2.1" width="12.4" height="3.5" fill="#cfe6f7"/><path d="M1.2 5.8H14.8M1.2 9.9H14.8M8 1.5V14" stroke="#3d95d8" stroke-width="1.1"/></svg></div><div class="tx" style="left:133.4px">diversity_inclusion_pharma_group_ag</div></div>
<div class="row" style="top:621px"><div class="guide" style="left:13.5px"></div><div class="guide" style="left:26.8px"></div><div class="guide" style="left:40.2px"></div><div class="guide" style="left:53.5px"></div><div class="guide" style="left:66.8px"></div><div class="guide" style="left:80.2px"></div><div class="chev" style="left:89.9px;top:6px"><svg width="5" height="8" viewBox="0 0 5 8"><path d="M0.8 0.8 4 4 0.8 7.2" fill="none" stroke="#333" stroke-width="1.3"/></svg></div><div class="ico" style="left:102.2px"><svg width="13" height="13" viewBox="0 0 16 16"><path d="M4.2 1.2C2.5 1.2 2.4 3 2.4 5S1.5 7.5 0.6 8C1.5 8.5 2.4 9 2.4 11S2.5 14.8 4.2 14.8M11.8 1.2C13.5 1.2 13.6 3 13.6 5S14.5 7.5 15.4 8C14.5 8.5 13.6 9 13.6 11S13.5 14.8 11.8 14.8" fill="none" stroke="#3f96ad" stroke-width="1.4" stroke-dasharray="3 0.7"/><rect x="5" y="3.5" width="6" height="9" rx="1.5" fill="#dff2f7" stroke="#3f96ad" stroke-width="1"/><path d="M6.3 6H9.7M6.3 8H9.7M6.3 10H9.7" stroke="#3f96ad" stroke-width="0.9"/><path d="M10 14.2H15M13.5 12.7 15 14.2 13.5 15.7" fill="none" stroke="#2a78c4" stroke-width="1.3"/></svg></div><div class="tx" style="left:120.3px">Trigger Functions</div></div>
<div class="row" style="top:641px"><div class="guide" style="left:13.5px"></div><div class="guide" style="left:26.8px"></div><div class="guide" style="left:40.2px"></div><div class="guide" style="left:53.5px"></div><div class="guide" style="left:66.8px"></div><div class="guide" style="left:80.2px"></div><div class="chev" style="left:89.9px;top:6px"><svg width="5" height="8" viewBox="0 0 5 8"><path d="M0.8 0.8 4 4 0.8 7.2" fill="none" stroke="#333" stroke-width="1.3"/></svg></div><div class="ico" style="left:102.2px"><svg width="13" height="13" viewBox="0 0 16 16"><rect x="1.5" y="1.5" width="10" height="10" rx="1.8" fill="#d8f5e6" stroke="#5cc79a" stroke-width="1.1"/><rect x="4.5" y="4.5" width="10" height="10" rx="1.8" fill="#e3f8ee" stroke="#5cc79a" stroke-width="1.1"/></svg></div><div class="tx" style="left:120.3px">Types</div></div>
<div class="row" style="top:661px"><div class="guide" style="left:13.5px"></div><div class="guide" style="left:26.8px"></div><div class="guide" style="left:40.2px"></div><div class="guide" style="left:53.5px"></div><div class="guide" style="left:66.8px"></div><div class="guide" style="left:80.2px"></div><div class="chev" style="left:89.9px;top:6px"><svg width="5" height="8" viewBox="0 0 5 8"><path d="M0.8 0.8 4 4 0.8 7.2" fill="none" stroke="#333" stroke-width="1.3"/></svg></div><div class="ico" style="left:102.2px"><svg width="13" height="13" viewBox="0 0 16 16"><rect x="1" y="1" width="10.5" height="10.5" rx="1.5" fill="#cdeb7a" stroke="#9dcb34" stroke-width="1.1"/><rect x="3" y="3" width="10.5" height="10.5" rx="1.5" fill="#cdeb7a" stroke="#9dcb34" stroke-width="1.1"/><rect x="4.8" y="4.8" width="10.5" height="10.5" rx="1.5" fill="#cdeb7a" stroke="#9dcb34" stroke-width="1.1"/><rect x="7.3" y="7.3" width="5.5" height="5.5" fill="none" stroke="#8ab82a" stroke-width="1"/><rect x="9.2" y="9.2" width="1.7" height="1.7" fill="#8ab82a"/></svg></div><div class="tx" style="left:120.3px">Views</div></div>
<div class="row" style="top:681px"><div class="guide" style="left:13.5px"></div><div class="guide" style="left:26.8px"></div><div class="guide" style="left:40.2px"></div><div class="guide" style="left:53.5px"></div><div class="chev" style="left:63.6px;top:6px"><svg width="5" height="8" viewBox="0 0 5 8"><path d="M0.8 0.8 4 4 0.8 7.2" fill="none" stroke="#333" stroke-width="1.3"/></svg></div><div class="ico" style="left:76.1px"><svg width="13" height="13" viewBox="0 0 16 16"><g fill="none" stroke="#f0a04b" stroke-width="1.3"><path d="M2 2A6 6 0 0 1 7 7M2 5A3 3 0 0 1 4.5 7.5"/><path d="M1 8 4 11M11.5 8 15 14H8Z"/></g></svg></div><div class="tx" style="left:94.0px">Subscriptions</div></div>
</div>
<div class="a" id="sep"></div>

<!-- tab bar -->
<div class="a" id="tabbar"></div>
<div class="a tab" style="left:352px">Dashboard</div>
<div class="a tab" style="left:426px">Properties</div>
<div class="a tab" style="left:497px">SQL</div>
<div class="a tab" style="left:535px">Statistics</div>
<div class="a tab" style="left:602px">Dependencies</div>
<div class="a tab" style="left:694px">Dependents</div>
<div class="a tab" style="left:773px">Processes</div>
<div class="a" style="left:846px;top:62px;line-height:0"><svg width="9" height="12" viewBox="0 0 9 12"><path d="M0 1C0 0.4 0.4 0 1 0H5.5L9 3.5V11C9 11.6 8.6 12 8 12H1C0.4 12 0 11.6 0 11Z" fill="#222"/><path d="M5.5 0V3.5H9" fill="#fff" opacity=".5"/><path d="M2 6.8H7M2 8.8H7" stroke="#fff" stroke-width="1"/></svg></div>
<div class="a tab" style="left:858px">customer_reten...</div>
<div class="a" style="left:966px;top:62px;line-height:0"><svg width="9" height="12" viewBox="0 0 9 12"><path d="M0 1C0 0.4 0.4 0 1 0H5.5L9 3.5V11C9 11.6 8.6 12 8 12H1C0.4 12 0 11.6 0 11Z" fill="#336699"/><path d="M5.5 0V3.5H9" fill="#fff" opacity=".5"/><path d="M2 6.8H7M2 8.8H7" stroke="#fff" stroke-width="1"/></svg></div>
<div class="a tab" style="left:979px;color:#2f6397">diversity_inclusion_queried.sql</div>
<div class="a" style="left:958px;top:79px;width:190px;height:2px;background:#2c5f90"></div>
<div class="a" style="left:1349px;top:65px;line-height:0"><svg width="9" height="9" viewBox="0 0 9 9"><path d="M0.9 0.9 8.1 8.1M8.1 0.9 0.9 8.1" stroke="#111" stroke-width="1.9"/></svg></div>

<!-- toolbar -->
<div class="a" id="tbar"></div>
<div class="a box" style="left:347px;top:86px;width:431px;height:23px"></div>
<div class="a" style="left:375px;top:87px;width:1px;height:21px;background:#c9ced8"></div>
<div class="a" style="left:749px;top:87px;width:1px;height:21px;background:#c9ced8"></div>
<div class="a" style="left:354px;top:90px;line-height:0"><svg width="15" height="15" viewBox="0 0 15 15"><g transform="rotate(-45 7.5 7.5)" fill="none" stroke="#222" stroke-width="1.3"><path d="M5.8 3.6A3.6 3.6 0 0 0 5.8 11.4Z"/><path d="M9.2 3.6A3.6 3.6 0 0 1 9.2 11.4Z"/><path d="M5.8 5.8H9.2M5.8 9.2H9.2"/><path d="M2.2 7.5H-0.8M12.8 7.5H15.8"/></g></svg></div>
<div class="a" style="left:384px;top:90px;font-size:12px;color:#222;letter-spacing:0.1px">newdb/postgres@PostgreSQL 15</div>
<div class="a" style="left:727px;top:95px;line-height:0"><svg width="10" height="6" viewBox="0 0 10 6"><path d="M1 1 5 5 9 1" fill="none" stroke="#222" stroke-width="1.3"/></svg></div>
<div class="a" style="left:758px;top:91px;line-height:0"><svg width="12" height="13" viewBox="0 0 12 13"><g fill="#222"><ellipse cx="5.2" cy="2.1" rx="5.2" ry="2.1"/><path d="M0 3.4C1 4.6 3 5 5.2 5S9.4 4.6 10.4 3.4V6C9.4 7.2 7.4 7.6 5.2 7.6S1 7.2 0 6Z"/><path d="M0 7.2C1 8.4 3 8.8 5.6 8.8V12.4C3 12.4 1 11.9 0 10.8Z"/><path d="M6.3 6.8 12 9.7 6.3 12.6Z"/></g></svg></div>
<div class="a box" style="left:1336px;top:86px;width:29px;height:23px"></div>
<div class="a" style="left:1344px;top:91px;line-height:0"><svg width="13" height="13" viewBox="0 0 13 13"><path d="M6.5 1.5A5 5 0 1 1 1.8 8" fill="none" stroke="#222" stroke-width="1.3"/><path d="M1.5 6.5A5 5 0 0 1 4 2.2" fill="none" stroke="#222" stroke-width="1.3" stroke-dasharray="1.3 1.3"/><path d="M5 0 7.5 1.5 5 3.2Z" fill="#222"/></svg></div>

<!-- row 2 -->
<div class="a box" style="left:347px;top:113px;width:73px;height:23px"></div>
<div class="a" style="left:376px;top:114px;width:28px;height:21px;background:#f5f6f8"></div>
<div class="a" style="left:375px;top:114px;width:1px;height:21px;background:#c9ced8"></div>
<div class="a" style="left:403px;top:114px;width:1px;height:21px;background:#c9ced8"></div>
<div class="a" style="left:355px;top:120px;line-height:0"><svg width="14" height="10.5" viewBox="0 0 14 12" preserveAspectRatio="none"><path d="M0 1.2C0 0.5 0.5 0 1.2 0H5L6.5 1.5H12.8C13.5 1.5 14 2 14 2.7V10.8C14 11.5 13.5 12 12.8 12H1.2C0.5 12 0 11.5 0 10.8Z" fill="#222"/></svg></div>
<div class="a" style="left:383px;top:119px;line-height:0"><svg width="12" height="12" viewBox="0 0 12 12"><path d="M0 1.2C0 0.5 0.5 0 1.2 0H9L12 3V10.8C12 11.5 11.5 12 10.8 12H1.2C0.5 12 0 11.5 0 10.8Z" fill="#6b6b6b"/><rect x="2" y="1.5" width="6.5" height="2.5" rx="0.8" fill="#f5f6f8"/><circle cx="6" cy="8.2" r="1.8" fill="#f5f6f8"/></svg></div>
<div class="a chevd" style="left:406px;top:123px"></div>
<div class="a box" style="left:423px;top:113px;width:40px;height:23px"></div>
<div class="a" style="left:430px;top:118px;line-height:0"><svg width="13" height="13" viewBox="0 0 13 13"><path d="M0.5 10.2 8.5 2.2 10.8 4.5 2.8 12.5H0.5Z" fill="#222"/><path d="M9.3 1.4 10.5 0.2 12.8 2.5 11.6 3.7Z" fill="#222"/></svg></div>
<div class="a chevd" style="left:445px;top:123px"></div>
<div class="a box dis" style="left:467px;top:113px;width:44px;height:23px"></div>
<div class="a" style="left:494px;top:114px;width:1px;height:21px;background:#c9ced8"></div>
<div class="a" style="left:475px;top:119px;line-height:0"><svg width="12" height="11" viewBox="0 0 12 11"><path d="M0 0H12L7.3 5.2V11L4.7 9.6V5.2Z" fill="#5f5f5f"/></svg></div>
<div class="a chevd g" style="left:498px;top:123px"></div>
<div class="a box dis" style="left:515px;top:113px;width:91px;height:23px;border-color:#e1e4ea"></div>
<div class="a" style="left:525px;top:117px;font-size:12px;color:#5c6b84">No limit</div>
<div class="a" style="left:587px;top:123px;width:0;height:0;border-left:4px solid transparent;border-right:4px solid transparent;border-top:4.5px solid #5b6478"></div>
<div class="a box" style="left:610px;top:113px;width:73px;height:23px"></div>
<div class="a" style="left:611px;top:114px;width:28px;height:21px;background:#f5f6f8;border-radius:3px 0 0 3px"></div>
<div class="a" style="left:638px;top:114px;width:1px;height:21px;background:#c9ced8"></div>
<div class="a" style="left:666px;top:114px;width:1px;height:21px;background:#c9ced8"></div>
<div class="a" style="left:620px;top:120px;width:10px;height:10px;background:#6b6b6b;border-radius:2px"></div>
<div class="a" style="left:649px;top:120px;width:0;height:0;border-top:5px solid transparent;border-bottom:5px solid transparent;border-left:9px solid #222"></div>
<div class="a chevd" style="left:669px;top:123px"></div>
<div class="a box" style="left:686px;top:113px;width:72px;height:23px"></div>
<div class="a" style="left:714px;top:114px;width:1px;height:21px;background:#c9ced8"></div>
<div class="a" style="left:742px;top:114px;width:1px;height:21px;background:#c9ced8"></div>
<div class="a" style="left:694px;top:119px;width:12px;height:12px;background:#222;border-radius:2px;line-height:0"><svg width="12" height="12" viewBox="0 0 12 12"><path d="M4 3H8.2M4 6H7.8M4 9H8.2M4.3 3V9" stroke="#fff" stroke-width="1.5"/></svg></div>
<div class="a" style="left:722px;top:119px;width:12px;height:12px;background:#222;border-radius:2px;line-height:0"><svg width="12" height="12" viewBox="0 0 12 12"><path d="M3.5 4V10M6 6V10M8.5 8.3V10" stroke="#fff" stroke-width="1.5"/></svg></div>
<div class="a chevd" style="left:745px;top:123px"></div>
<div class="a box dis" style="left:762px;top:113px;width:56px;height:23px"></div>
<div class="a" style="left:790px;top:114px;width:1px;height:21px;background:#c9ced8"></div>
<div class="a" style="left:769px;top:118px;line-height:0"><svg width="15" height="14" viewBox="0 0 15 14"><g fill="#6b6b6b"><ellipse cx="6" cy="2.3" rx="5.5" ry="2"/><path d="M0.5 3.8C1.5 5 3.5 5.4 6 5.4S10.5 5 11.5 3.8V5.8C10.5 7 8.5 7.4 6 7.4S1.5 7 0.5 5.8Z"/><path d="M0.5 7.4C1.5 8.6 3.5 9 6 9V11C3.5 11 1.5 10.6 0.5 9.4Z"/></g><circle cx="10.5" cy="9.5" r="4.3" fill="#6b6b6b" stroke="#f5f6f8" stroke-width="0.8"/><path d="M8.5 9.5 10 11 12.5 8.3" fill="none" stroke="#f5f6f8" stroke-width="1.2"/></svg></div>
<div class="a" style="left:797px;top:118px;line-height:0"><svg width="15" height="14" viewBox="0 0 15 14"><g fill="#6b6b6b"><ellipse cx="6" cy="2.3" rx="5.5" ry="2"/><path d="M0.5 3.8C1.5 5 3.5 5.4 6 5.4S10.5 5 11.5 3.8V5.8C10.5 7 8.5 7.4 6 7.4S1.5 7 0.5 5.8Z"/><path d="M0.5 7.4C1.5 8.6 3.5 9 6 9V11C3.5 11 1.5 10.6 0.5 9.4Z"/></g><circle cx="10.5" cy="9.5" r="4.3" fill="#6b6b6b" stroke="#f5f6f8" stroke-width="0.8"/><path d="M12.3 11C12.5 9 11 8 9 8.5M9.7 7.2 8.5 8.5 9.8 9.7" fill="none" stroke="#f5f6f8" stroke-width="1.1"/></svg></div>
<div class="a box" style="left:822px;top:113px;width:40px;height:23px"></div>
<div class="a" style="left:829px;top:119px;line-height:0"><svg width="13" height="11" viewBox="0 0 13 11"><path d="M3.5 1.2H13M3.5 5.5H13M3.5 9.8H13" stroke="#222" stroke-width="1.6"/><path d="M0.8 0V2.5M0.8 3.5V7.5M0.8 8.5V11" stroke="#222" stroke-width="1" stroke-dasharray="1 0.6"/></svg></div>
<div class="a chevd" style="left:844px;top:123px"></div>
<div class="a box" style="left:865px;top:113px;width:29px;height:23px"></div>
<div class="a" style="left:873px;top:118px;width:14px;height:14px;border-radius:50%;background:#222;color:#fff;font-size:11px;font-weight:bold;text-align:center;line-height:14px">?</div>

<!-- query tabs -->
<div class="a" id="qtabs"></div>
<div class="a qt" style="left:352px">Query</div>
<div class="a qt" style="left:400px">Query History</div>
<div class="a" style="left:344px;top:162px;width:47px;height:3px;background:#2c5f90"></div>
<div class="a" style="left:1344px;top:146px;line-height:0"><svg width="12" height="12" viewBox="0 0 13 13"><path d="M1.5 11.5 11.5 1.5" stroke="#222" stroke-width="1.3"/><path d="M7 0.8H12.2V6Z M0.8 7V12.2H6Z" fill="#222"/></svg></div>

<!-- editor -->
<div class="a" id="gutter"></div>
<div class="a" id="editor"></div>
<div class="a ln" style="left:344px;top:171px">1</div><div class="code" style="top:171px"><span class="k">SELECT</span></div>
<div class="a ln" style="left:344px;top:187px">2</div><div class="code" style="top:187px">    ag.<span class="p">id</span>,</div>
<div class="a ln" style="left:344px;top:203px">3</div><div class="code" style="top:203px">    ag.<span class="p">gender</span>,</div>
<div class="a ln" style="left:344px;top:219px">4</div><div class="code" style="top:219px">    job_level_fy20,</div>
<div class="a ln" style="left:344px;top:235px">5</div><div class="code" style="top:235px">    new_hire_fy20,</div>
<div class="a ln" style="left:344px;top:251px">6</div><div class="code" style="top:251px">    performance_fy20,</div>
<div class="a ln" style="left:344px;top:267px">7</div><div class="code" style="top:267px">    <span class="k">CASE</span> <span class="k">WHEN</span> leaver_fy20 = <span class="s">'Yes'</span> <span class="k">THEN</span> <span class="s">'Y'</span> <span class="k">ELSE</span> <span class="s">'N'</span> <span class="k">END</span> <span class="k">AS</span> leaver_fy20,</div>
<div class="a ln" style="left:344px;top:283px">8</div><div class="code" style="top:283px">    department_fy20,</div>
<div class="a ln" style="left:344px;top:299px">9</div><div class="code" style="top:299px">    promotion_fy20,</div>
<div class="a ln" style="left:344px;top:315px">10</div><div class="code" style="top:315px">    age_group,</div>
<div class="a ln" style="left:344px;top:331px">11</div><div class="code" style="top:331px">    age_fy20,</div>
<div class="a ln" style="left:344px;top:347px">12</div><div class="code" style="top:347px">    ag.<span class="p">nationality</span></div>
<div class="a ln" style="left:344px;top:363px">13</div><div class="code" style="top:363px"><span class="k">FROM</span></div>
<div class="a ln" style="left:344px;top:379px">14</div><div class="code" style="top:379px">diversity_inclusion_backing_1 b</div>
<div class="a ln" style="left:344px;top:395px">15</div><div class="code" style="top:395px"><span class="k">INNER</span> <span class="k">JOIN</span> diversity_inclusion_pharma_group_ag ag <span class="k">ON</span> b.<span class="p">id</span> = ag.<span class="p">id</span></div>

<div class="a" style="left:344px;top:749px;width:1022px;height:5px;background:linear-gradient(to bottom,rgba(240,242,245,0),#eceef2)"></div>
<!-- status -->
<div class="a" id="status"></div>
<div class="a st" style="left:354px">Total rows: 500 of 500</div>
<div class="a" style="left:482px;top:755px;width:1px;height:18px;background:#d7dbe2"></div>
<div class="a st" style="left:493px">Query complete 00:00:00.157</div>
<div class="a" style="left:660px;top:755px;width:1px;height:18px;background:#d7dbe2"></div>
<div class="a st" style="left:1303px;letter-spacing:-0.3px">Ln 1, Col 1</div>

<div class="a" id="bottom"></div>
<div class="a" id="bgreen"></div>

</body></html>
